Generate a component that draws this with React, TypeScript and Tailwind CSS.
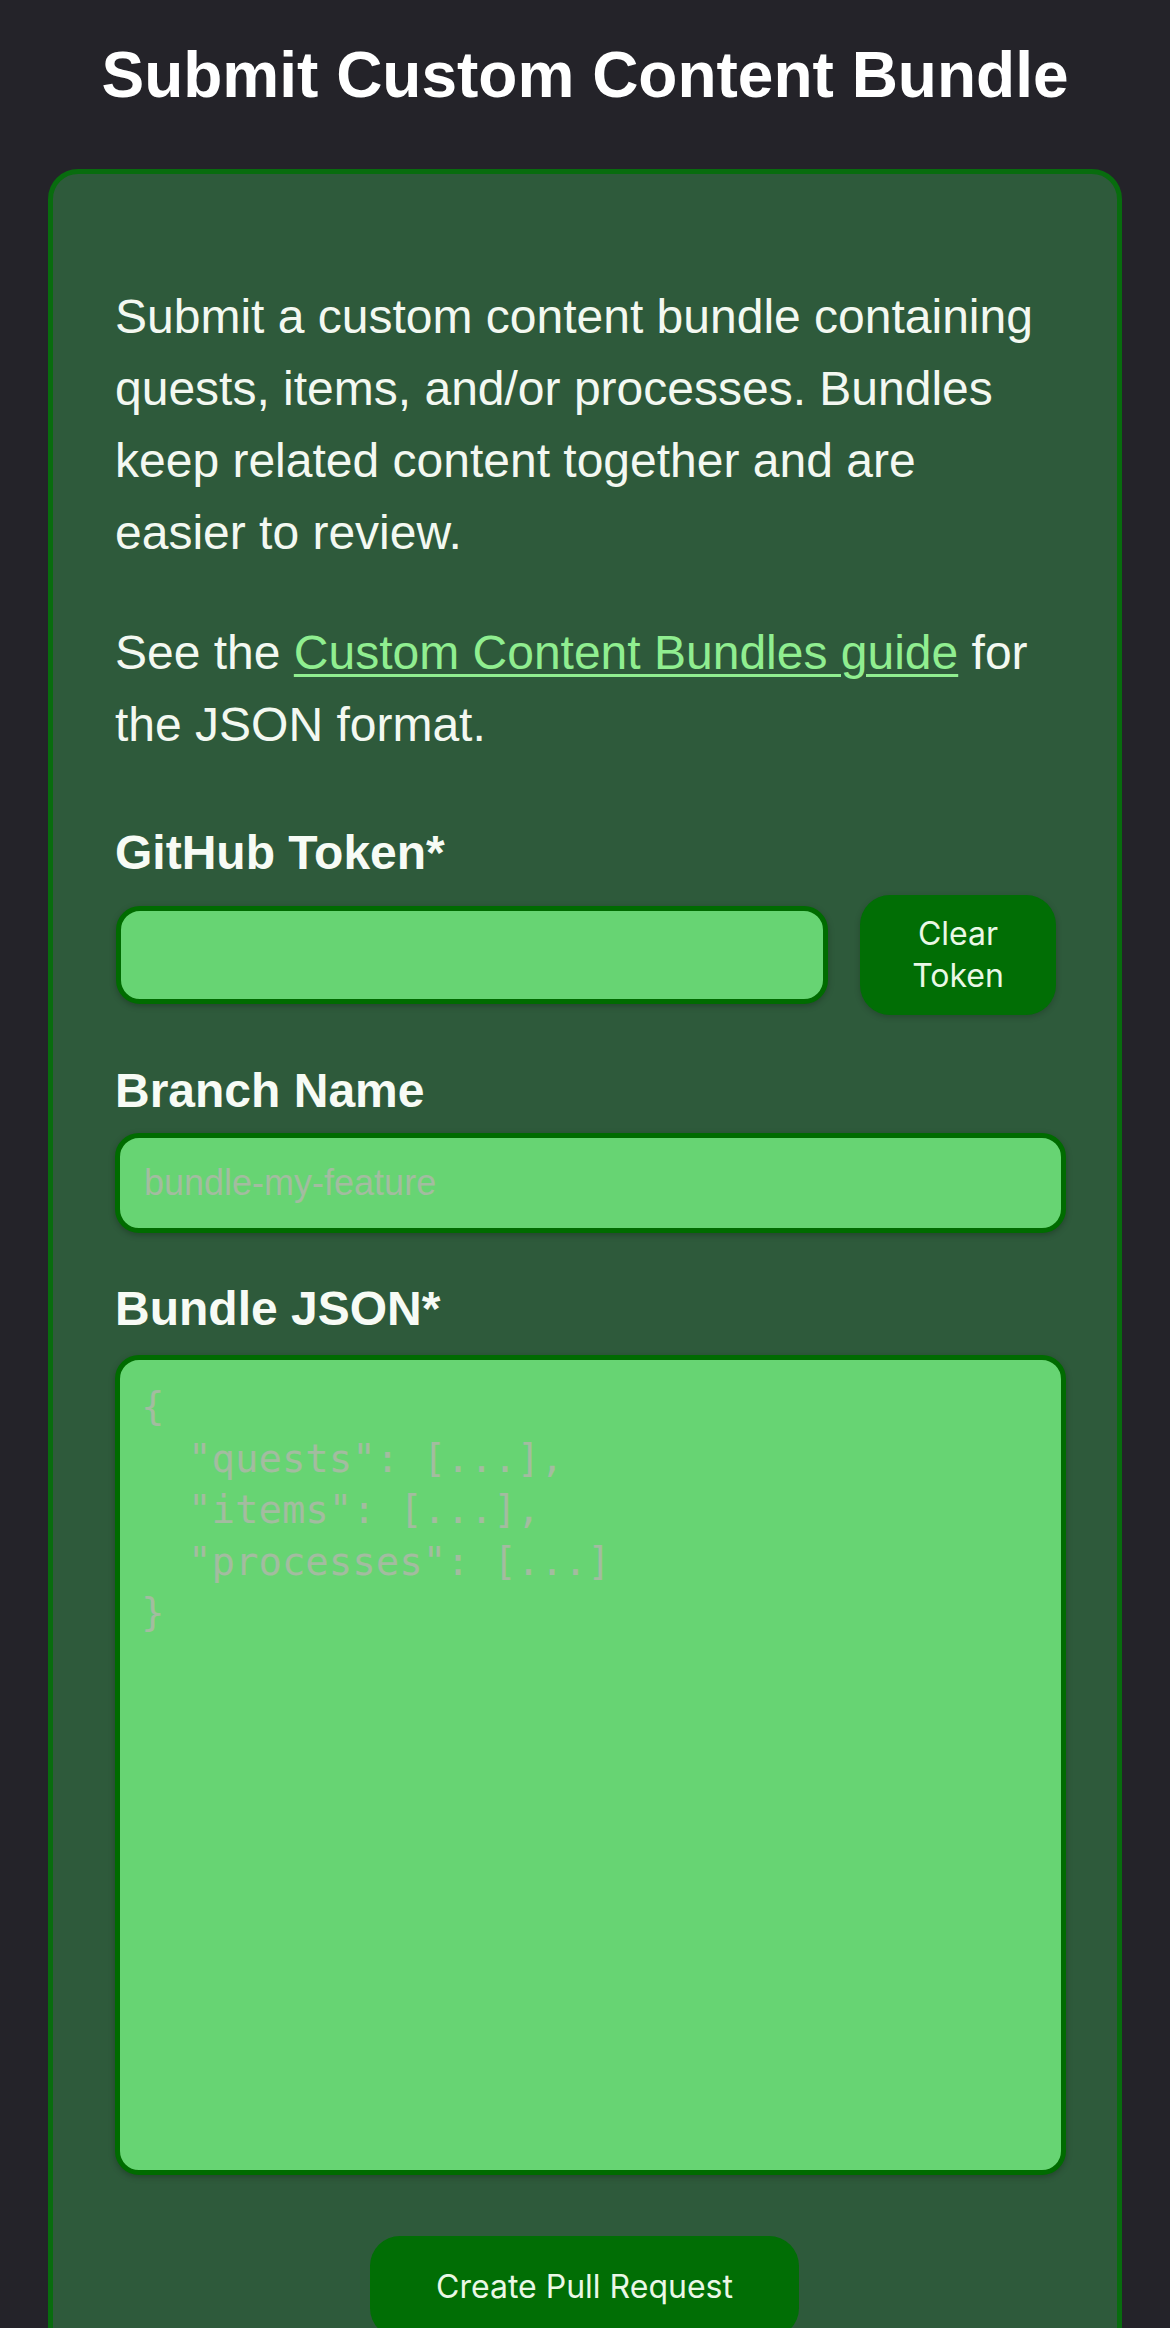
import React from "react";

const sans = { fontFamily: '"Liberation Sans", Arial, Helvetica, sans-serif' };

export default function App() {
  return (
    <div
      className="min-h-screen bg-[#242329] pt-[37px] overflow-hidden"
      style={sans}
    >
      <h1 className="text-center text-[64px] font-bold leading-[1.2] text-white">
        Submit Custom Content Bundle
      </h1>

      <div className="mx-[48px] mt-[55px] rounded-[30px] border-[5px] border-[#086c0e] bg-[#2e5a3b] pb-[80px] pl-[62px] pr-[51px] pt-[107px]">
        <p className="pr-[20px] text-[48px] leading-[72px] text-[#f3f8f1]">
          Submit a custom content bundle containing quests, items, and/or
          processes. Bundles keep related content together and are easier to
          review.
        </p>
        <p className="mt-[48px] pr-[20px] text-[48px] leading-[72px] text-[#f3f8f1]">
          See the{" "}
          <a
            href="#"
            className="text-[#90ee90] underline decoration-[3px] underline-offset-[5px]"
          >
            Custom Content Bundles guide
          </a>{" "}
          for the JSON format.
        </p>

        {/* GitHub token */}
        <label className="mt-[64px] block text-[48px] font-bold leading-[1.15] text-[#f7fbf5]">
          GitHub Token*
        </label>
        <div className="mt-[15px] flex items-center gap-[32px] pl-[1px]">
          <input
            type="password"
            className="h-[98px] min-w-0 flex-1 rounded-[24px] border-[5px] border-[#006b00] bg-[#67d473] px-[24px] text-[36px] shadow-[0_2px_6px_rgba(0,0,0,0.25)] outline-none"
          />
          <button
            className="mr-[10px] h-[120px] w-[196px] rounded-[30px] bg-[#016e05] text-[32px] leading-[42px] text-[#eaf8e6] shadow-[0_2px_6px_rgba(0,0,0,0.2)]"
            style={{ fontFamily: "Inter, sans-serif" }}
          >
            Clear
            <br />
            Token
          </button>
        </div>

        {/* Branch */}
        <label className="mt-[48px] block text-[48px] font-bold leading-[1.15] text-[#f7fbf5]">
          Branch Name
        </label>
        <input
          type="text"
          placeholder="bundle-my-feature"
          className="mt-[15px] block h-[100px] w-full rounded-[24px] border-[5px] border-[#006b00] bg-[#67d473] px-[24px] text-[36px] shadow-[0_2px_6px_rgba(0,0,0,0.25)] outline-none placeholder:text-[#a3bca0]"
          style={sans}
        />

        {/* Bundle JSON */}
        <label className="mt-[48px] block text-[48px] font-bold leading-[1.15] text-[#f7fbf5]">
          Bundle JSON*
        </label>
        <textarea
          placeholder={'{\n  "quests": [...],\n  "items": [...],\n  "processes": [...]\n}'}
          className="mt-[19px] block h-[820px] w-full resize-none rounded-[24px] border-[5px] border-[#006b00] bg-[#67d473] p-[21px] text-[39px] leading-[51.5px] shadow-[0_2px_6px_rgba(0,0,0,0.25)] outline-none placeholder:text-[#a3bca0]"
          style={{ fontFamily: '"DejaVu Sans Mono", monospace' }}
        />

        <div className="mt-[61px] flex justify-center pr-[12px]">
          <button
            className="rounded-[30px] bg-[#016e05] px-[66px] py-[30px] text-[32px] leading-[42px] text-[#eaf8e6]"
            style={{ fontFamily: "Inter, sans-serif" }}
          >
            Create Pull Request
          </button>
        </div>
      </div>
    </div>
  );
}
